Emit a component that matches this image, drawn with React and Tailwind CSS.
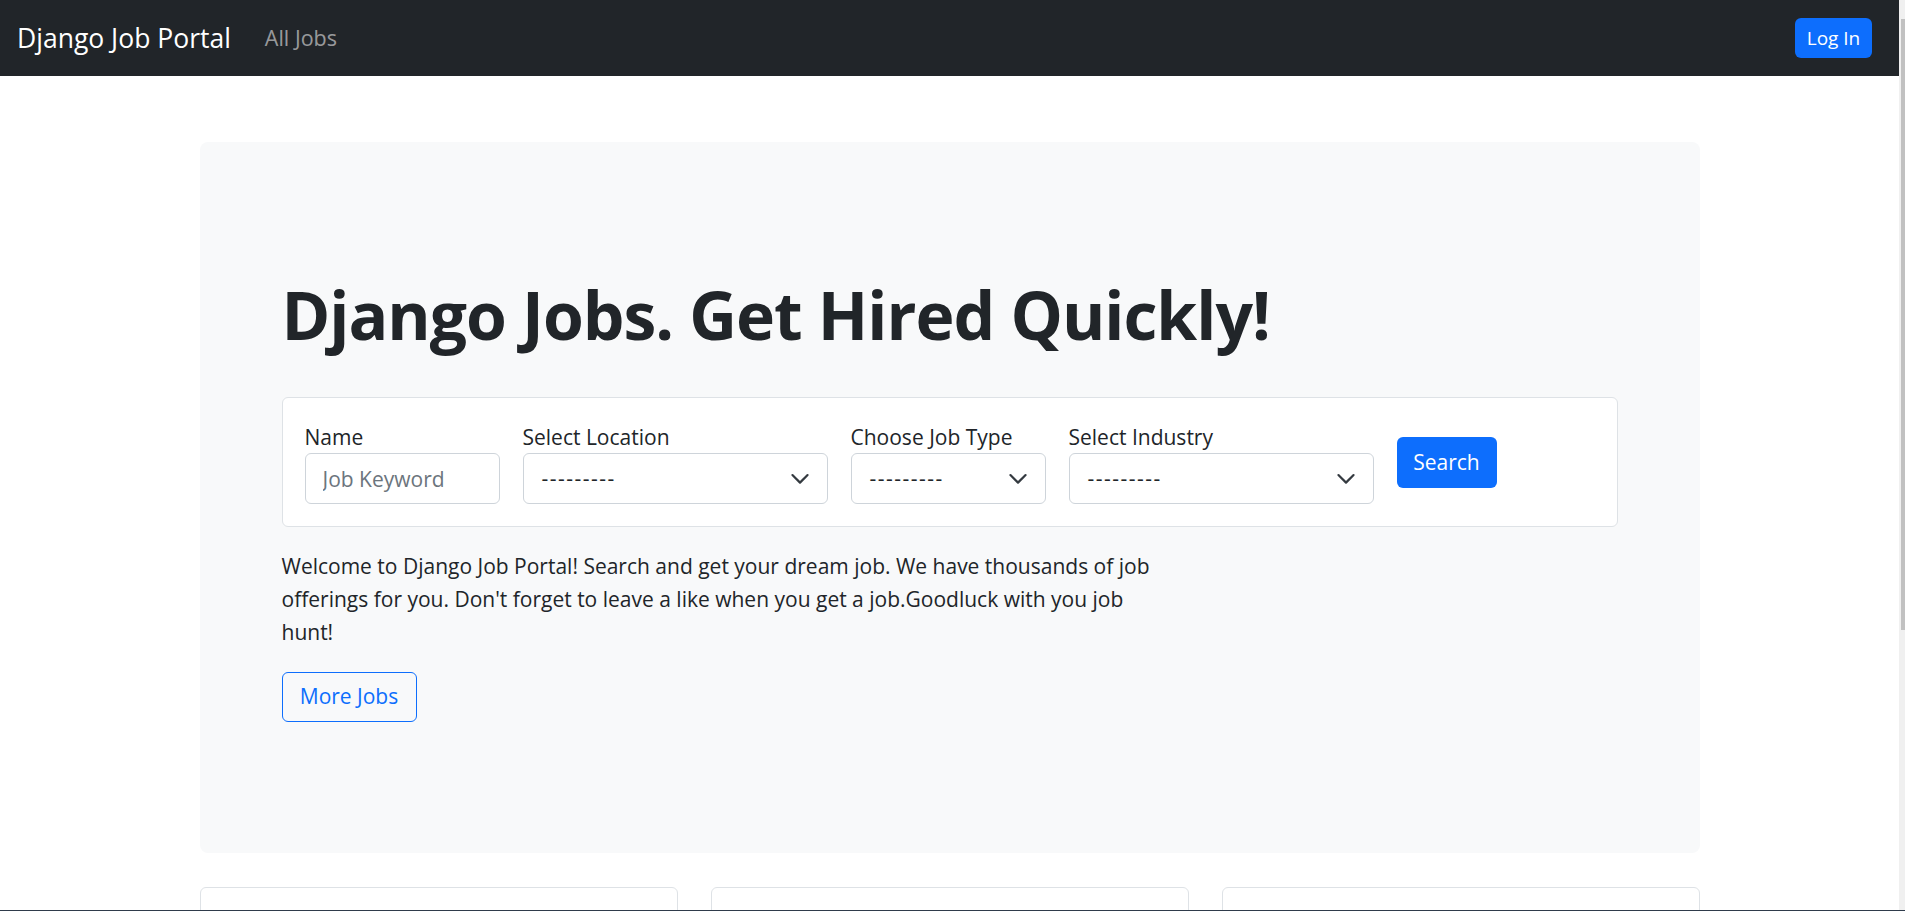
import { useState } from "react";

const font = { fontFamily: '"Open Sans", "Noto Sans", sans-serif' };

function Chevron() {
  return (
    <svg width="22" height="17" viewBox="0 0 16 12" fill="none" className="shrink-0">
      <path d="m2.5 3.5 5.5 5.5 5.5-5.5" stroke="#343a40" strokeWidth="1.6" strokeLinecap="round" strokeLinejoin="round" />
    </svg>
  );
}

function SelectBox({ label, width }) {
  return (
    <div className={width}>
      <label className="block text-[21px] leading-[33px] pt-[1px] -mb-[1px] text-[#212529]">{label}</label>
      <div className="h-[51px] flex items-center justify-between bg-white border border-[#ced4da] rounded-[6px] pl-[18px] pr-[16px] text-[21px] text-[#212529]">
        <span className="tracking-[1.5px]">---------</span>
        <Chevron />
      </div>
    </div>
  );
}

export default function App() {
  const [keyword, setKeyword] = useState("");

  return (
    <div className="h-[911px] flex flex-col overflow-hidden bg-white" style={font}>
      <div className="flex flex-1 min-h-0">
        <div className="flex-1 min-w-0 overflow-hidden">
          <nav className="h-[76px] bg-[#212529] flex items-center justify-between pl-[17px] pr-[27px]">
            <div className="flex items-center">
              <a href="#" className="text-white text-[26.5px] leading-none">Django Job Portal</a>
              <a href="#" className="ml-[34px] text-[21.5px] leading-none text-[rgba(255,255,255,0.55)]">All Jobs</a>
            </div>
            <button className="h-[40px] w-[77px] rounded-[6px] bg-[#0d6efd] text-white text-[19px]">Log In</button>
          </nav>

          <div className="w-[1500px] mx-auto">
            <div className="mt-[66px] bg-[#f8f9fa] rounded-[8px] px-[82px] pt-[133px] pb-[131px]">
              <h1 className="text-[66px] leading-[1.2] font-bold tracking-[-1px] text-[#212529] mb-[43px]">Django Jobs. Get Hired Quickly!</h1>

              <div className="bg-white border border-[#dee2e6] rounded-[6px] p-[22px] flex items-center gap-[23px]">
                <div className="w-[195px]">
                  <label className="block text-[21px] leading-[33px] pt-[1px] -mb-[1px] text-[#212529]">Name</label>
                  <input
                    value={keyword}
                    onChange={(e) => setKeyword(e.target.value)}
                    placeholder="Job Keyword"
                    className="w-full h-[51px] border border-[#ced4da] rounded-[6px] px-[17px] text-[21px] text-[#212529] placeholder:text-[#6c757d] outline-none"
                  />
                </div>
                <SelectBox label="Select Location" width="w-[305px]" />
                <SelectBox label="Choose Job Type" width="w-[195px]" />
                <SelectBox label="Select Industry" width="w-[305px]" />
                <button className="w-[100px] h-[51px] pt-[2px] rounded-[6px] bg-[#0d6efd] text-white text-[21px]">Search</button>
              </div>

              <p className="w-[890px] mt-[23px] text-[21px] leading-[33px] text-[#212529]">
                Welcome to Django Job Portal! Search and get your dream job. We have thousands of job offerings for you. Don't forget to leave a like when you get a job.Goodluck with you job hunt!
              </p>

              <button className="mt-[23px] h-[50px] w-[135px] border border-[#0d6efd] rounded-[6px] text-[#0d6efd] text-[21px]">More Jobs</button>
            </div>

            <div className="grid grid-cols-3 gap-[33px] mt-[34px]">
              <div className="h-[200px] border border-[#dee2e6] rounded-[6px] bg-white"></div>
              <div className="h-[200px] border border-[#dee2e6] rounded-[6px] bg-white"></div>
              <div className="h-[200px] border border-[#dee2e6] rounded-[6px] bg-white"></div>
            </div>
          </div>
        </div>

        <div className="w-[6px] bg-[#f0f0f0] pt-[19px] pl-[2px]">
          <div className="h-[611px] bg-[#c1c1c1]"></div>
        </div>
      </div>
      <div className="h-px bg-[#2f3b4b]"></div>
    </div>
  );
}
